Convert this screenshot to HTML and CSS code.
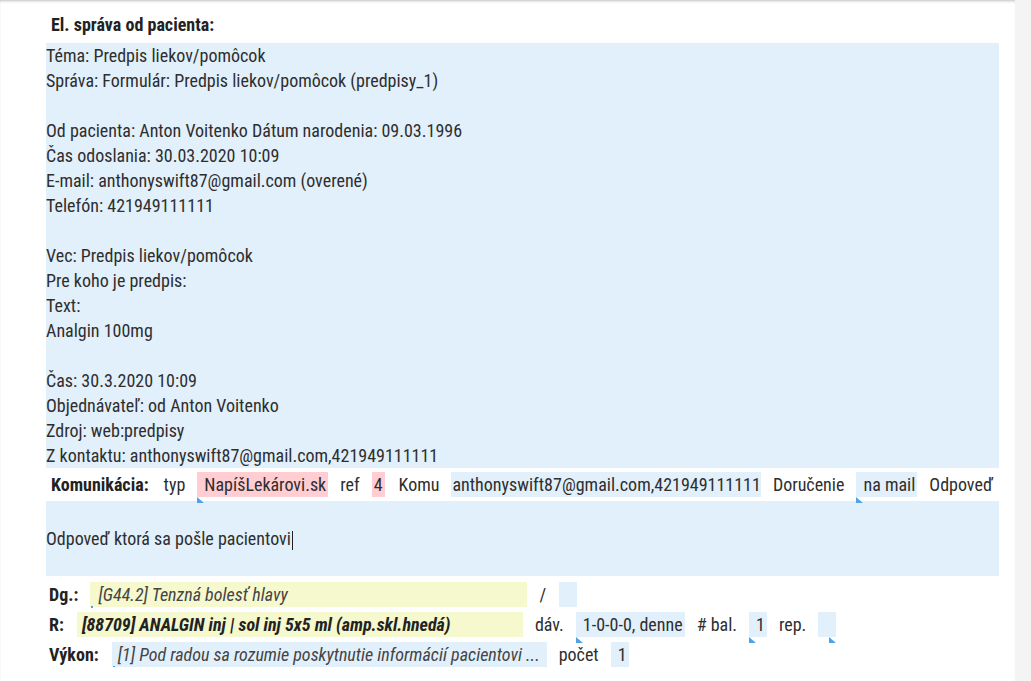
FILE: index.html
```html
<!DOCTYPE html>
<html lang="sk">

<head>
    <meta charset="UTF-8" />
    <meta name="viewport" content="width=device-width, initial-scale=1.0" />
    <title>El. správa od pacienta</title>
    <link rel="stylesheet" href="styles.css">
</head>

<body>
    <!-- Karta so správou -->
    <div class="card">
        <h2 class="title">El. správa od pacienta:</h2>

        <!-- Text správy od pacienta -->
        <div class="message">
            <div>Téma: Predpis liekov/pomôcok</div>
            <div>Správa: Formulár: Predpis liekov/pomôcok (predpisy_1)</div>
            <div>&nbsp;</div>
            <div>Od pacienta: Anton Voitenko Dátum narodenia: 09.03.1996</div>
            <div>Čas odoslania: 30.03.2020 10:09</div>
            <div>E-mail: anthonyswift87@gmail.com (overené)</div>
            <div>Telefón: 421949111111</div>
            <div>&nbsp;</div>
            <div>Vec: Predpis liekov/pomôcok</div>
            <div>Pre koho je predpis:</div>
            <div>Text:</div>
            <div>Analgin 100mg</div>
            <div>&nbsp;</div>
            <div>Čas: 30.3.2020 10:09</div>
            <div>Objednávateľ: od Anton Voitenko</div>
            <div>Zdroj: web:predpisy</div>
            <div>Z kontaktu: anthonyswift87@gmail.com,421949111111</div>
        </div>

        <!-- Riadok komunikácie -->
        <div class="row row-kom">
            <span class="label">Komunikácia:</span>
            <span class="word">typ</span>
            <span class="chip pink pad-l mark">NapíšLekárovi.sk</span>
            <span class="word">ref</span>
            <span class="chip pink chip-ref">4</span>
            <span class="word">Komu</span>
            <span class="chip blue chip-mail">anthonyswift87@gmail.com,421949111111</span>
            <span class="word">Doručenie</span>
            <span class="chip blue pad-l mark">na mail</span>
            <span class="word">Odpoveď</span>
        </div>

        <!-- Odpoveď pacientovi -->
        <div class="reply">Odpoveď ktorá sa pošle pacientovi<span class="caret"></span></div>

        <!-- Diagnóza -->
        <div class="row row-dg">
            <span class="label">Dg.:</span>
            <span class="chip yellow chip-dg mark-small"><i>[G44.2] Tenzná bolesť hlavy</i></span>
            <span class="word slash">/</span>
            <span class="chip blue chip-empty"></span>
        </div>

        <!-- Recept -->
        <div class="row row-r">
            <span class="label">R:</span>
            <span class="chip yellow chip-r"><b><i>[88709] ANALGIN inj | sol inj 5x5 ml (amp.skl.hnedá)</i></b></span>
            <span class="word">dáv.</span>
            <span class="chip blue pad-l mark">1-0-0-0, denne</span>
            <span class="word"># bal.</span>
            <span class="chip blue pad-l mark">1</span>
            <span class="word">rep.</span>
            <span class="chip blue chip-empty mark-right"></span>
        </div>

        <!-- Výkon -->
        <div class="row row-vykon">
            <span class="label">Výkon:</span>
            <span class="chip blue chip-vykon mark-small"><i>[1] Pod radou sa rozumie poskytnutie informácií pacientovi ...</i></span>
            <span class="word">počet</span>
            <span class="chip blue pad-l">1</span>
        </div>
    </div>
</body>
</html>
```

FILE: styles.css
```css
/* Základ stránky */
body {
    margin: 0;
    background-color: #f4f4f4;
    font-family: Roboto, 'Noto Sans', sans-serif;
    font-size: 18px;
    font-stretch: 87.5%;
    color: #2e2e2e;
}

/* Biela karta */
.card {
    width: 1015px;
    height: 681px;
    background: white;
    box-sizing: border-box;
    padding: 12px 16px 0 46px;
    box-shadow: inset 0 3px 3px -2px rgba(0, 0, 0, 0.25), inset 1px 0 1px -1px rgba(0, 0, 0, 0.2);
}

/* Nadpis */
.title {
    margin: 0 0 6px 5px;
    font-size: 18px;
    font-weight: bold;
    line-height: 25px;
    color: #222;
}

/* Blok so správou */
.message {
    background: #e2f0fc;
    line-height: 25px;
}

/* Riadky formulára */
.row {
    display: flex;
    align-items: center;
    height: 25px;
    line-height: 25px;
    white-space: nowrap;
}

.row-kom {
    margin-top: 4px;
    padding-left: 5px;
}

.row-dg {
    margin-top: 6px;
    padding-left: 3px;
}

.row-r {
    margin-top: 5px;
    padding-left: 3px;
}

.row-vykon {
    margin-top: 5px;
    padding-left: 3px;
}

.label {
    font-weight: bold;
    color: #222;
    margin-right: 15px;
}

.row-dg .label {
    margin-right: 12px;
}

.row-r .label,
.row-vykon .label {
    margin-right: 13px;
}

.word {
    margin-right: 12px;
}

/* Políčka */
.chip {
    position: relative;
    display: inline-block;
    height: 25px;
    padding: 0 2px;
    margin-right: 12px;
    box-sizing: border-box;
}

.pad-l {
    padding-left: 7px;
}

.pink {
    background: #ffcdd2;
}

.blue {
    background: #e2f0fc;
}

.yellow {
    background: #f6f8cd;
}

.chip-ref {
    width: 17px;
    margin-right: 14px;
}

.chip-mail {
    padding: 0 0 0 1px;
}

.chip-empty {
    width: 18px;
}

.chip-dg {
    width: 437px;
    padding-left: 8px;
    color: #444;
}

.chip-r {
    width: 446px;
    padding-left: 5px;
    color: #222;
}

.chip-vykon {
    width: 435px;
    padding-left: 6px;
    color: #444;
    overflow: hidden;
    text-overflow: ellipsis;
}

.slash {
    margin-right: 13px;
}

/* Modrý trojuholník v rohu políčka */
.mark::after,
.mark-right::after {
    content: "";
    position: absolute;
    left: 0;
    bottom: -6px;
    border-left: 7px solid #4da3ea;
    border-bottom: 6px solid transparent;
    transform: scaleY(-1);
}

.mark-right::after {
    left: auto;
    right: 0;
}

.mark-small::after {
    content: "";
    position: absolute;
    left: 1px;
    bottom: -1px;
    width: 2px;
    height: 2px;
    background: #4da3ea;
}

/* Odpoveď */
.reply {
    margin-top: 4px;
    height: 75px;
    line-height: 75px;
    background: #e2f0fc;
}

.caret {
    display: inline-block;
    width: 1px;
    height: 19px;
    margin-left: 1px;
    vertical-align: middle;
    background: #222;
}
```
